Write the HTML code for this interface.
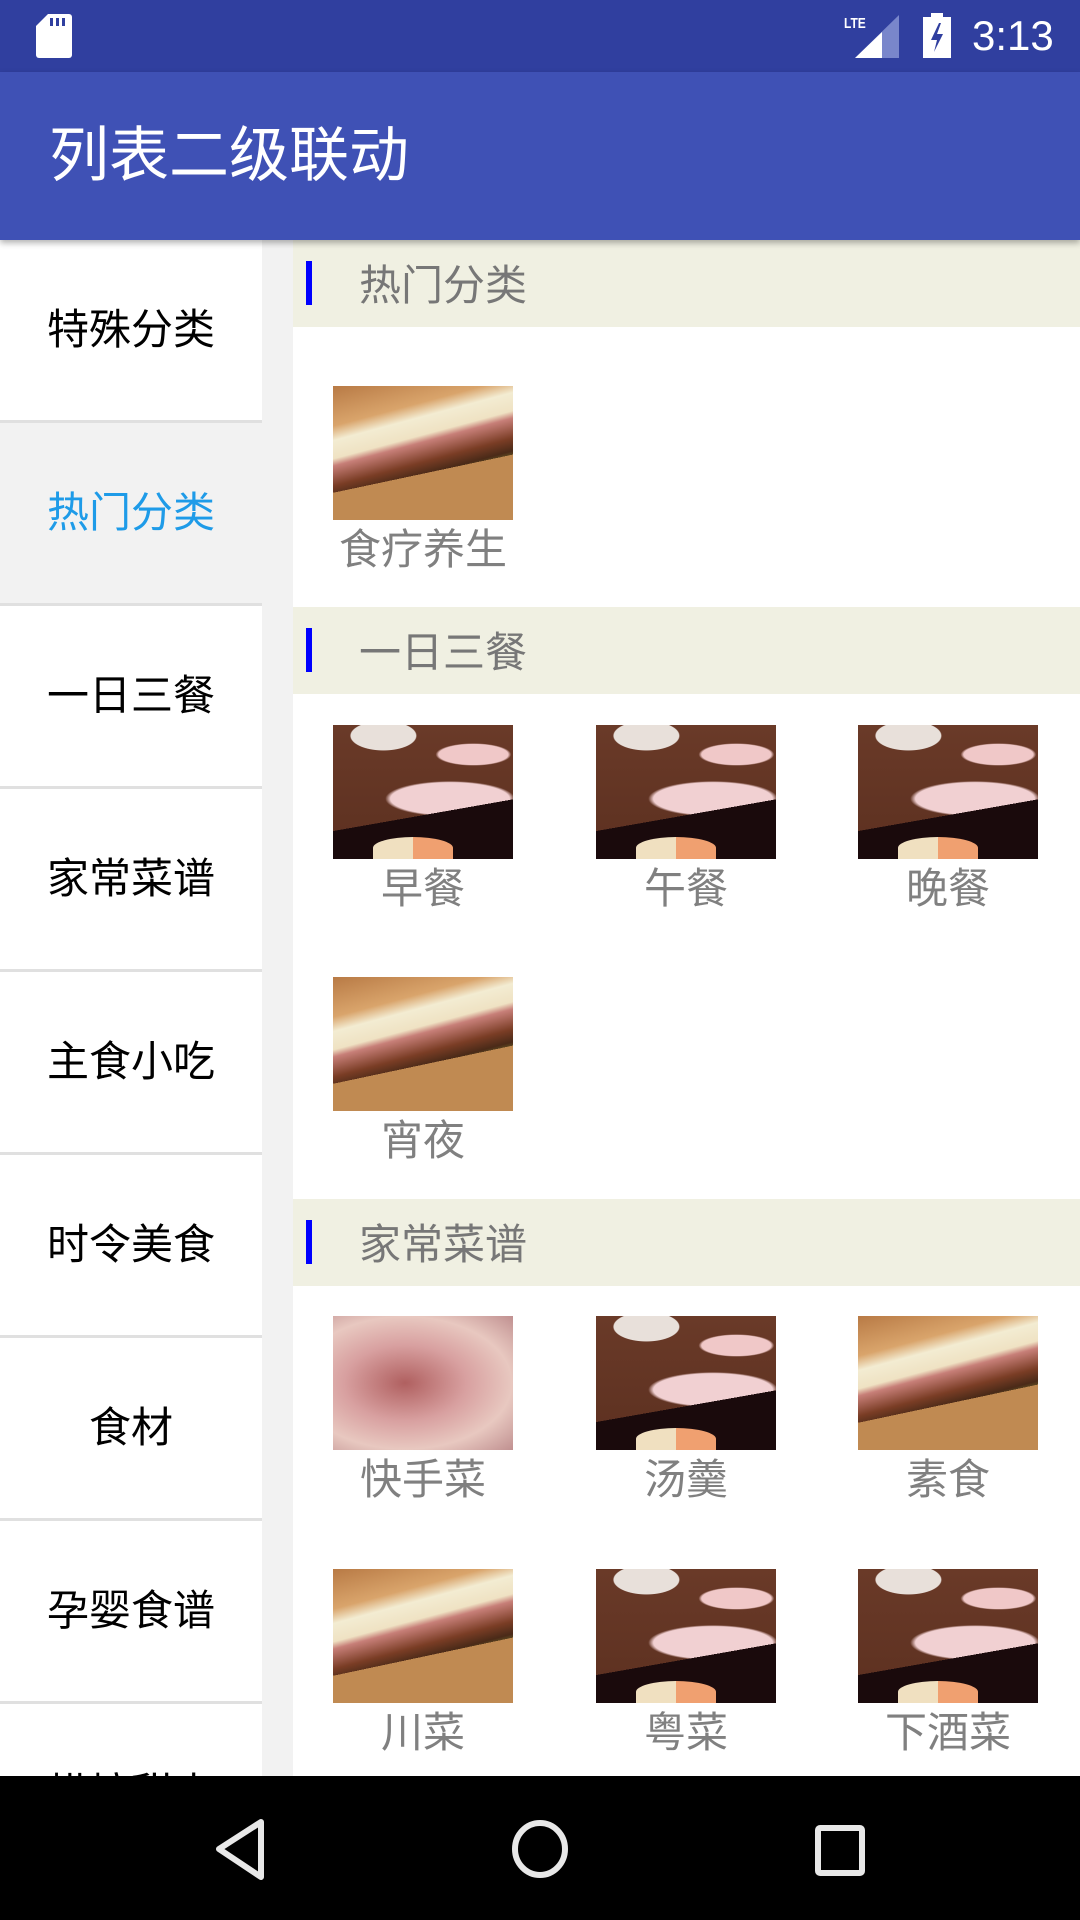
<!DOCTYPE html>
<html><head><meta charset="utf-8"><style>
*{margin:0;padding:0;box-sizing:border-box}
body{width:1080px;height:1920px;overflow:hidden;position:relative;background:#fff;font-family:"Liberation Sans","Noto Sans CJK SC",sans-serif}
.abs{position:absolute}
#status{left:0;top:0;width:1080px;height:72px;background:#303F9F}
#bar{left:0;top:72px;width:1080px;height:168px;background:#3F51B5;box-shadow:0 3px 6px rgba(0,0,0,.3);z-index:2}
#bar span{position:absolute;left:49px;top:49px;font-size:60px;color:#fff;line-height:70px}
#left{left:0;top:240px;width:262px;height:1536px;background:#fff;overflow:hidden}
#gap{left:262px;top:240px;width:31px;height:1536px;background:#f2f2f2}
.item{position:absolute;left:0;width:262px;height:183px;border-bottom:3px solid #e0e0e0;font-size:42px;color:#000;text-align:center;line-height:180px}
.sel{background:#f2f2f2;color:#1e9be8}
.hdr{position:absolute;left:293px;width:787px;height:87px;background:#f0f0e2}
.hdr i{position:absolute;left:13px;top:21px;width:6px;height:44px;background:#0000ff}
.hdr span{position:absolute;left:66px;top:2px;line-height:87px;font-size:42px;color:#777}
.cell{position:absolute;width:180px;height:134px;overflow:hidden}
.lbl{position:absolute;width:240px;text-align:center;font-size:42px;color:#808080;line-height:50px}
.sw{background:
 linear-gradient(168deg,transparent 0 62%,#c08a52 62% 100%),
 linear-gradient(165deg,#b87a45 0,#d9a46b 22%,#f3ecd2 30%,#efe2c3 40%,#c77f78 44%,#7a3d25 55%,#4a2a18 62%,#7b7a2f 68%,#b07a43 72%,#d09a5f 100%)}
.su{background:
 linear-gradient(170deg,transparent 0 64%,#1a0a0c 64% 100%),
 radial-gradient(ellipse 30% 18% at 28% 8%,#e8e0da 60%,transparent 62%),
 radial-gradient(ellipse 35% 14% at 78% 22%,#f0c8c8 55%,transparent 60%),
 radial-gradient(ellipse 60% 22% at 65% 55%,#f1d0d2 55%,transparent 60%),
 linear-gradient(#6a3a28,#5c3020)}
.su::after{content:"";position:absolute;left:40px;top:112px;width:80px;height:22px;border-radius:50% 50% 0 0;background:linear-gradient(90deg,#f0e0c0 0 50%,#f0a070 50%)}
.pk{background:radial-gradient(ellipse at 40% 50%,#b06060,#d8a0a0 40%,#e8c8c0 70%,#c09090)}
#nav{left:0;top:1776px;width:1080px;height:144px;background:#000}
</style></head><body>
<div id="status" class="abs">
 <svg class="abs" style="left:36px;top:14px" width="36" height="44" viewBox="0 0 36 44"><path d="M12 0H33a3 3 0 0 1 3 3V41a3 3 0 0 1-3 3H3a3 3 0 0 1-3-3V12Z" fill="#fff"/><rect x="14" y="4" width="3" height="8" fill="#303F9F"/><rect x="20" y="4" width="3" height="8" fill="#303F9F"/><rect x="26" y="4" width="3" height="8" fill="#303F9F"/></svg>
 <div class="abs" style="left:844px;top:15px;font-size:15px;font-weight:bold;color:#fff;transform:scaleX(.8);transform-origin:left">LTE</div>
 <svg class="abs" style="left:855px;top:15px" width="44" height="43"><polygon points="44,0 44,43 0,43" fill="#7986CB"/><polygon points="27,17 27,43 0,43" fill="#fff"/></svg>
 <svg class="abs" style="left:923px;top:13px" width="28" height="45"><rect x="8" y="0" width="12" height="5" fill="#fff"/><rect x="0" y="4" width="28" height="41" fill="#fff"/><polygon points="16,10 8,27 14,27 11,39 20,21 14,21 18,10" fill="#303F9F"/></svg>
 <div class="abs" style="left:972px;top:12px;font-size:42px;color:#fff">3:13</div>
</div>
<div id="bar" class="abs"><span>列表二级联动</span></div>
<div id="left" class="abs">
 <div class="item" style="top:0">特殊分类</div>
 <div class="item sel" style="top:183px">热门分类</div>
 <div class="item" style="top:366px">一日三餐</div>
 <div class="item" style="top:549px">家常菜谱</div>
 <div class="item" style="top:732px">主食小吃</div>
 <div class="item" style="top:915px">时令美食</div>
 <div class="item" style="top:1098px">食材</div>
 <div class="item" style="top:1281px">孕婴食谱</div>
 <div class="item" style="top:1464px">烘焙甜点</div>
</div>
<div id="gap" class="abs"></div>

<div class="hdr" style="top:240px"><i></i><span>热门分类</span></div>
<div class="cell sw" style="left:333px;top:386px"></div>
<div class="lbl" style="left:303px;top:525px">食疗养生</div>

<div class="hdr" style="top:607px"><i></i><span>一日三餐</span></div>
<div class="cell su" style="left:333px;top:725px"></div><div class="lbl" style="left:303px;top:864px">早餐</div>
<div class="cell su" style="left:596px;top:725px"></div><div class="lbl" style="left:566px;top:864px">午餐</div>
<div class="cell su" style="left:858px;top:725px"></div><div class="lbl" style="left:828px;top:864px">晚餐</div>
<div class="cell sw" style="left:333px;top:977px"></div><div class="lbl" style="left:303px;top:1116px">宵夜</div>

<div class="hdr" style="top:1199px"><i></i><span>家常菜谱</span></div>
<div class="cell pk" style="left:333px;top:1316px"></div><div class="lbl" style="left:303px;top:1455px">快手菜</div>
<div class="cell su" style="left:596px;top:1316px"></div><div class="lbl" style="left:566px;top:1455px">汤羹</div>
<div class="cell sw" style="left:858px;top:1316px"></div><div class="lbl" style="left:828px;top:1455px">素食</div>
<div class="cell sw" style="left:333px;top:1569px"></div><div class="lbl" style="left:303px;top:1708px">川菜</div>
<div class="cell su" style="left:596px;top:1569px"></div><div class="lbl" style="left:566px;top:1708px">粤菜</div>
<div class="cell su" style="left:858px;top:1569px"></div><div class="lbl" style="left:828px;top:1708px">下酒菜</div>

<div id="nav" class="abs">
 <svg class="abs" style="left:0;top:0" width="1080" height="144">
  <path d="M261 46 L219 73 L261 101 Z" fill="none" stroke="#e8e8e8" stroke-width="6" stroke-linejoin="round"/>
  <ellipse cx="540" cy="73" rx="25" ry="26" fill="none" stroke="#e8e8e8" stroke-width="6"/>
  <rect x="818" y="52" width="44" height="45" rx="2" fill="none" stroke="#e8e8e8" stroke-width="6"/>
 </svg>
</div>
</body></html>
